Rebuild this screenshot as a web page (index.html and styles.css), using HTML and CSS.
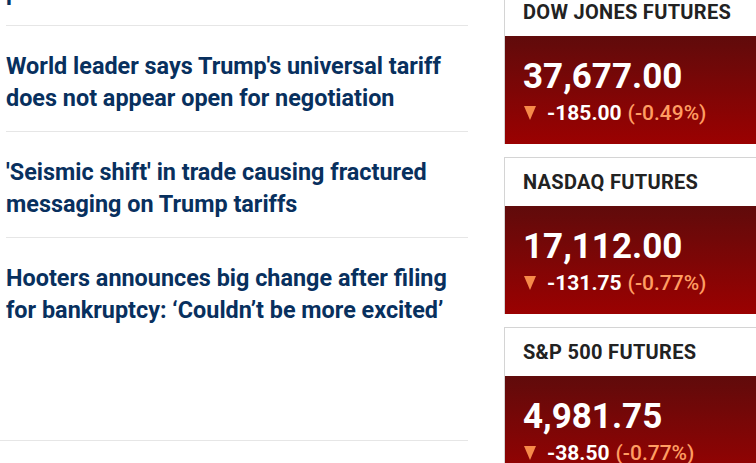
FILE: index.html
```html
<!DOCTYPE html>
<html>
<head>
    <meta charset="UTF-8">
    <title>Markets</title>
    <link rel="stylesheet" href="styles.css">
</head>
<body>
<div class="page">
    <div class="feed">
        <div class="story">
            <a class="headline" href="#">Markets brace for another volatile session<br>plan</a>
        </div>
        <div class="story">
            <a class="headline" href="#">World leader says Trump's universal tariff does not appear open for negotiation</a>
        </div>
        <div class="story">
            <a class="headline" href="#">'Seismic shift' in trade causing fractured messaging on Trump tariffs</a>
        </div>
        <div class="story story-last">
            <a class="headline" href="#">Hooters announces big change after filing for bankruptcy: ‘Couldn’t be more excited’</a>
        </div>
        <div class="feed-end"></div>
    </div>
    <div class="quotes">
        <div class="quote">
            <div class="quote-name">DOW JONES FUTURES</div>
            <div class="quote-body">
                <div class="quote-price">37,677.00</div>
                <div class="quote-change"><span class="arrow"></span>-185.00 <span class="pct">(-0.49%)</span></div>
            </div>
        </div>
        <div class="quote">
            <div class="quote-name">NASDAQ FUTURES</div>
            <div class="quote-body">
                <div class="quote-price">17,112.00</div>
                <div class="quote-change"><span class="arrow"></span>-131.75 <span class="pct">(-0.77%)</span></div>
            </div>
        </div>
        <div class="quote">
            <div class="quote-name">S&amp;P 500 FUTURES</div>
            <div class="quote-body">
                <div class="quote-price">4,981.75</div>
                <div class="quote-change"><span class="arrow"></span>-38.50 <span class="pct">(-0.77%)</span></div>
            </div>
        </div>
    </div>
</div>
</body>
</html>
```

FILE: styles.css
```css
* {
    margin: 0;
    padding: 0;
    box-sizing: border-box;
}

html,
body {
    width: 756px;
    height: 463px;
    overflow: hidden;
    background: #fff;
    font-family: Roboto, "Liberation Sans", Arial, sans-serif;
}

.page {
    display: flex;
    align-items: flex-start;
    gap: 36px;
    width: 1000px;
}

.feed {
    width: 468px;
    margin-top: -80px;
}

.story {
    margin-left: 6px;
    padding: 24px 0 17px;
    border-top: 1px solid #e6e6e6;
}

.story:first-child {
    border-top: none;
}

.story-last {
    height: 203px;
}

.feed-end {
    border-top: 1px solid #e6e6e6;
}

.headline {
    display: block;
    color: #08305e;
    font-size: 23.4px;
    font-weight: 700;
    line-height: 32px;
    text-decoration: none;
}

.quotes {
    display: flex;
    flex-direction: column;
    gap: 13px;
    width: 300px;
    margin-top: -13px;
}

.quote {
    border: 1px solid #d4d4d4;
    border-bottom: none;
}

.quote-name {
    height: 48px;
    padding-left: 18px;
    line-height: 48px;
    color: #222;
    font-size: 20px;
    font-weight: 700;
    letter-spacing: 0.3px;
}

.quote-body {
    height: 108px;
    padding: 21px 18px 0;
    background: linear-gradient(#600b0b, #9b0101);
    color: #fff;
}

.quote-price {
    font-size: 35px;
    font-weight: 700;
    line-height: 40px;
}

.quote-change {
    display: flex;
    align-items: center;
    gap: 11px;
    margin-top: 3px;
    font-size: 21px;
    font-weight: 700;
    line-height: 26px;
}

.arrow {
    width: 12px;
    height: 14px;
    margin-left: 1px;
    border-left: 6px solid transparent;
    border-right: 6px solid transparent;
    border-top: 14px solid #f68a4a;
}

.pct {
    margin-left: -5px;
    color: #ff9d62;
    font-weight: 500;
}
```
